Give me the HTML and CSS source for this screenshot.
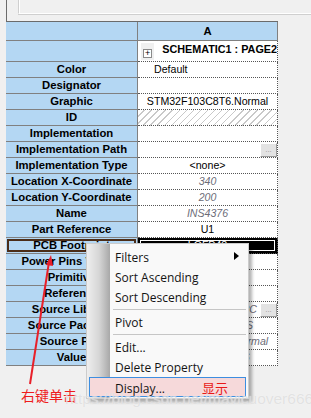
FILE: index.html
```html
<!doctype html>
<html lang="en">
  <head>
    <meta charset="UTF-8" />
    <meta name="viewport" content="width=device-width, initial-scale=1.0" />
    <title>Property Editor</title>
    <link rel="stylesheet" href="styles.css">
  </head>

  <body>
    <div class="top">
      <div class="top-inner"></div>
    </div>

    <div class="sheet">
      <div class="key head"></div>
      <div class="val head">A</div>

      <div class="key tall"></div>
      <div class="val tall part">
        <span class="expander"><span class="plus">+</span></span>
        <span class="part-name">SCHEMATIC1 : PAGE2</span>
      </div>

      <div class="key">Color</div>
      <div class="val left">Default</div>

      <div class="key">Designator</div>
      <div class="val"></div>

      <div class="key">Graphic</div>
      <div class="val">STM32F103C8T6.Normal</div>

      <div class="key">ID</div>
      <div class="val hatched"></div>

      <div class="key">Implementation</div>
      <div class="val"></div>

      <div class="key">Implementation Path</div>
      <div class="val with-btn">
        <span class="val-text"></span>
        <span class="dots">...</span>
      </div>

      <div class="key">Implementation Type</div>
      <div class="val">&lt;none&gt;</div>

      <div class="key">Location X-Coordinate</div>
      <div class="val muted">340</div>

      <div class="key">Location Y-Coordinate</div>
      <div class="val muted">200</div>

      <div class="key">Name</div>
      <div class="val muted">INS4376</div>

      <div class="key">Part Reference</div>
      <div class="val">U1</div>

      <div class="key focus">PCB Footprint</div>
      <div class="val selected">LQFP48</div>

      <div class="key">Power Pins Visible</div>
      <div class="val"></div>

      <div class="key">Primitive</div>
      <div class="val"></div>

      <div class="key">Reference</div>
      <div class="val"></div>

      <div class="key">Source Library</div>
      <div class="val with-btn muted">
        <span class="val-text">C:\CADENCE\LIBRARY\STM32.OLB\STM32C</span>
        <span class="dots">...</span>
      </div>

      <div class="key">Source Package</div>
      <div class="val muted">STM32F103C8T6S</div>

      <div class="key">Source Part</div>
      <div class="val muted">STM32F103C8T6.Normal</div>

      <div class="key">Value</div>
      <div class="val muted">STM32F103C8T6</div>
    </div>

    <!-- right-click menu, drawn over the grid -->
    <div class="menu">
      <div class="item">Filters<span class="sub-arrow"></span></div>
      <div class="item">Sort Ascending</div>
      <div class="item">Sort Descending</div>
      <div class="sep"></div>
      <div class="item">Pivot</div>
      <div class="sep"></div>
      <div class="item">Edit...</div>
      <div class="item">Delete Property</div>
      <div class="item hover"><span class="item-label">Display...</span><span class="note">显示</span></div>
    </div>

    <svg class="pointer" width="311" height="418" viewBox="0 0 311 418">
      <line x1="30" y1="384" x2="49" y2="262" stroke="#e8202a" stroke-width="2" />
      <polygon points="51,255 46,265 53,266" fill="#e8202a" />
    </svg>
    <div class="callout">右键单击</div>
    <div class="watermark">https://blog.csdn.net/mavicuover666</div>
  </body>
</html>
```

FILE: styles.css
```css
body {
  margin: 0;
  width: 311px;
  height: 418px;
  overflow: hidden;
  position: relative;
  background: #f0f0f0;
  font-family: "Liberation Sans", Arial, sans-serif;
  color: #000;
}

/* frame above the grid */
.top {
  height: 21px;
  margin-left: 6px;
  border-left: 1px solid #6b6b6b;
  box-sizing: border-box;
}

.top-inner {
  margin-left: 11px;
  height: 13px;
  border-left: 1px solid #cfcfcf;
  border-bottom: 1px solid #fff;
  box-shadow: inset 1px 0 #fff, 0 1px #cfcfcf;
}

/* property grid */
.sheet {
  display: grid;
  grid-template-columns: 132px 140px;
  width: 272px;
  margin-left: 6px;
  border-top: 1px solid #6b6b6b;
}

.key {
  height: 16px;
  box-sizing: border-box;
  background: #b4d7f3;
  border-right: 1px solid #808080;
  border-bottom: 1px solid #808080;
  font-weight: bold;
  font-size: 11.3px;
  line-height: 15px;
  text-align: center;
  white-space: nowrap;
  overflow: hidden;
}

.val {
  height: 16px;
  box-sizing: border-box;
  background: #fff;
  border-right: 1px dotted #555;
  border-bottom: 1px dotted #555;
  font-size: 10.6px;
  line-height: 15px;
  text-align: center;
  white-space: nowrap;
  overflow: hidden;
}

.head {
  height: 19px;
  line-height: 18px;
}

.val.head {
  background: #b4d7f3;
  border-right: 1px solid #808080;
  border-bottom: 1px solid #808080;
  font-weight: bold;
  font-size: 11.3px;
}

.tall {
  height: 21px;
}

.part {
  display: flex;
  align-items: flex-start;
  text-align: left;
}

.expander {
  display: flex;
  align-items: center;
  justify-content: center;
  width: 14px;
  height: 17px;
  margin: 2px 0 0 3px;
  background: #f0f0f0;
}

.plus {
  display: block;
  width: 9px;
  height: 9px;
  margin-top: 4px;
  box-sizing: border-box;
  border: 1px solid #8a8a8a;
  background: #fff;
  font-size: 9px;
  line-height: 6px;
  text-align: center;
}

.part-name {
  margin: 1px 0 0 8px;
  font-weight: bold;
  font-size: 10.8px;
  line-height: 14px;
}

.left {
  text-align: left;
  padding-left: 16px;
}

.muted {
  color: #6c6c78;
  font-style: italic;
}

.hatched {
  background: repeating-linear-gradient(135deg, #fff 0 4px, #c9c9c9 4px 5px);
}

.with-btn {
  display: flex;
  justify-content: flex-end;
  align-items: flex-start;
}

.val-text {
  flex: 1;
  overflow: hidden;
  text-align: right;
  direction: rtl;
  padding-right: 3px;
}

.dots {
  flex: none;
  width: 17px;
  height: 14px;
  margin-top: 1px;
  box-sizing: border-box;
  background: #e3e3e3;
  border: 1px solid;
  border-color: #fff #9a9a9a #9a9a9a #fff;
  color: #9a9a9a;
  font-style: normal;
  font-size: 8px;
  line-height: 12px;
  text-align: center;
}

.key.focus {
  box-shadow: inset 0 0 0 1px #b4d7f3, inset 0 0 0 3px #4b2d18;
}

.val.selected {
  background: #000;
  color: #fff;
  box-shadow: inset 0 0 0 2px #000, inset 0 0 0 3px #fff;
}

/* context menu */
.menu {
  position: absolute;
  left: 86px;
  top: 243px;
  width: 163px;
  box-sizing: border-box;
  padding: 3px 2px 1px;
  border: 1px solid #cccccc;
  background: linear-gradient(to right, #eeeeee 0, #d6d6d6 12px, #a8a8a8 23px, #f9f9f9 23px);
  box-shadow: 3px 3px 3px rgba(0, 0, 0, 0.3);
  font-family: "Open Sans", "Noto Sans", "Noto Sans CJK SC", sans-serif;
  font-size: 12px;
  color: #141414;
}

.item {
  position: relative;
  height: 20px;
  line-height: 19px;
  box-sizing: border-box;
  padding-left: 25px;
  border: 1px solid transparent;
  white-space: nowrap;
}

.item.hover {
  background: #f6d9da;
  border-color: #3d8ee0;
}

.item-label {
  display: inline-block;
  width: 87px;
}

.note {
  color: #e81818;
  font-family: "Noto Sans CJK SC", sans-serif;
  font-size: 13px;
}

.sub-arrow {
  position: absolute;
  right: 6px;
  top: 4px;
  border-left: 5px solid #000;
  border-top: 4px solid transparent;
  border-bottom: 4px solid transparent;
}

.sep {
  height: 1px;
  margin: 2px 0 2px 24px;
  background: #c6c6c6;
}

/* annotation drawn over the screenshot */
.pointer {
  position: absolute;
  left: 0;
  top: 0;
}

.callout {
  position: absolute;
  left: 21px;
  top: 386px;
  color: #ee1c1c;
  font-family: "Noto Sans CJK SC", sans-serif;
  font-size: 14px;
  line-height: 18px;
}

.watermark {
  position: absolute;
  left: 65px;
  top: 390px;
  color: rgba(205, 205, 205, 0.55);
  text-shadow: 0 0 1px rgba(255, 255, 255, 0.8);
  font-family: "Liberation Sans", Arial, sans-serif;
  font-size: 15.5px;
  line-height: 18px;
  white-space: nowrap;
}
```
